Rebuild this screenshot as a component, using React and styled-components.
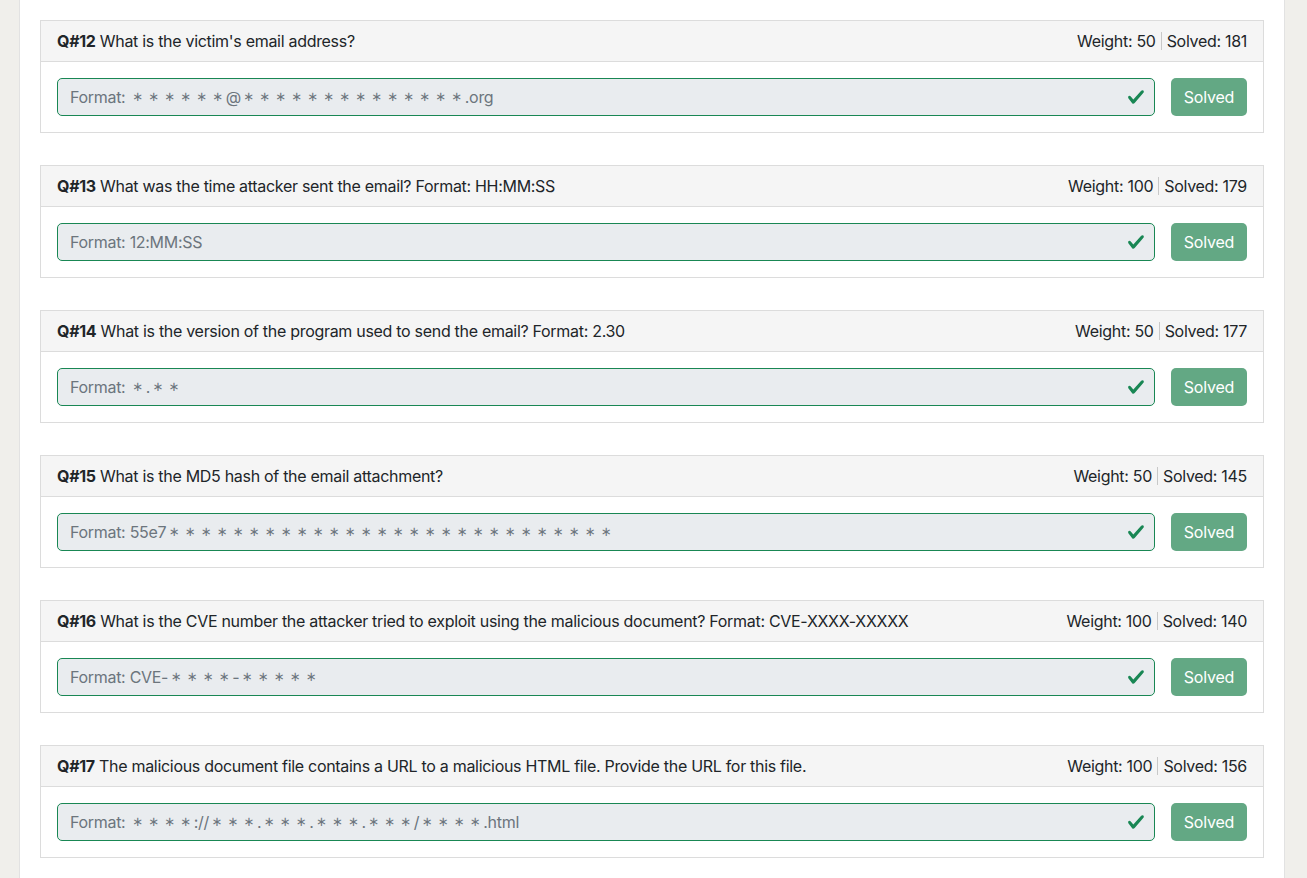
import React from "react";
import styled, { createGlobalStyle } from "styled-components";

const GlobalStyle = createGlobalStyle`
  * { box-sizing: border-box; }
  body {
    margin: 0;
    background: #f0efeb;
    font-family: Inter, sans-serif;
    letter-spacing: -0.3px;
    color: #212529;
  }
`;

// "*" in a format string is a hidden character, drawn as a fixed-width star
const questions = [
  {
    num: 12,
    text: "What is the victim's email address?",
    weight: 50,
    solved: 181,
    format: `******@${"*".repeat(14)}.org`,
  },
  {
    num: 13,
    text: "What was the time attacker sent the email? Format: HH:MM:SS",
    weight: 100,
    solved: 179,
    format: "12:MM:SS",
  },
  {
    num: 14,
    text: "What is the version of the program used to send the email? Format: 2.30",
    weight: 50,
    solved: 177,
    format: "*.**",
  },
  {
    num: 15,
    text: "What is the MD5 hash of the email attachment?",
    weight: 50,
    solved: 145,
    format: `55e7${"*".repeat(28)}`,
  },
  {
    num: 16,
    text: "What is the CVE number the attacker tried to exploit using the malicious document? Format: CVE-XXXX-XXXXX",
    weight: 100,
    solved: 140,
    format: "CVE-****-*****",
  },
  {
    num: 17,
    text: "The malicious document file contains a URL to a malicious HTML file. Provide the URL for this file.",
    weight: 100,
    solved: 156,
    format: "****://***.***.***.***/****.html",
  },
];

const Page = styled.div`
  margin-left: 19px;
  width: 1266px;
  min-height: 878px;
  background: #fff;
  border-left: 1px solid #e2e2e2;
  border-right: 1px solid #e2e2e2;
  padding: 20px 20px 0;
  display: flex;
  flex-direction: column;
  gap: 32px;
`;

const Card = styled.div`
  border: 1px solid #dcdcdc;
  background: #fff;
`;

const Header = styled.div`
  background: #f5f5f5;
  border-bottom: 1px solid #dcdcdc;
  height: 41px;
  padding: 0 16px;
  display: flex;
  align-items: center;
  justify-content: space-between;
  font-size: 16px;
  line-height: 24px;
`;

const Title = styled.div`
  white-space: nowrap;
  b { font-weight: 700; }
`;

const Stats = styled.div`
  display: flex;
  align-items: center;
  white-space: nowrap;
`;

const Stat = styled.span`
  & + & {
    margin-left: 5px;
    padding-left: 5px;
    border-left: 1px solid #c8c8c8;
    line-height: 18px;
  }
`;

const Body = styled.div`
  padding: 16px;
  display: flex;
  gap: 16px;
`;

const Field = styled.div`
  flex: 1;
  position: relative;
  height: 38px;
  border: 1px solid #198754;
  border-radius: 5px;
  background: #e9ecef;
  padding: 0 36px 0 12px;
  display: flex;
  align-items: center;
  font-size: 16px;
  color: #6c757d;
  white-space: nowrap;
  overflow: hidden;
`;

const Star = styled.span`
  display: inline-block;
  width: 16px;
  text-align: center;
  font-family: "DejaVu Sans", sans-serif;
  font-size: 13px;
  letter-spacing: 0;
  position: relative;
  top: -1px;
`;

const Check = styled.svg`
  position: absolute;
  right: 9px;
  top: 9px;
  width: 18px;
  height: 18px;
`;

const Button = styled.button`
  width: 76px;
  height: 38px;
  border: none;
  border-radius: 5px;
  background: #63a884;
  color: #fff;
  font-family: Inter, sans-serif;
  letter-spacing: -0.2px;
  font-size: 16px;
  padding: 0;
`;

function CheckIcon() {
  return (
    <Check viewBox="0 0 8 8">
      <path
        fill="#198754"
        d="M2.3 6.73.6 4.53c-.4-1.04.46-1.4 1.1-.8l1.1 1.4 3.4-3.8c.6-.63 1.6-.27 1.2.7l-4 4.6c-.43.5-.8.4-1.1.1z"
      />
    </Check>
  );
}

function Format({ value }) {
  const parts = value.split(/(\*)/).filter(Boolean);
  return (
    <>
      Format:&nbsp;
      {parts.map((p, i) => (p === "*" ? <Star key={i}>∗</Star> : <span key={i}>{p}</span>))}
    </>
  );
}

export default function App() {
  return (
    <>
      <GlobalStyle />
      <Page>
        {questions.map((q) => (
          <Card key={q.num}>
            <Header>
              <Title>
                <b>Q#{q.num}</b> {q.text}
              </Title>
              <Stats>
                <Stat>Weight: {q.weight}</Stat>
                <Stat>Solved: {q.solved}</Stat>
              </Stats>
            </Header>
            <Body>
              <Field>
                <Format value={q.format} />
                <CheckIcon />
              </Field>
              <Button disabled>Solved</Button>
            </Body>
          </Card>
        ))}
      </Page>
    </>
  );
}
